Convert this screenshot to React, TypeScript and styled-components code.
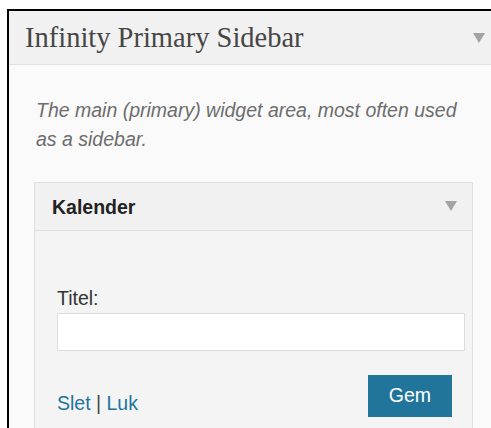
import React from 'react'
import styled, { createGlobalStyle } from 'styled-components'

const GlobalStyle = createGlobalStyle`
  html, body {
    margin: 0;
    padding: 0;
    background: #ffffff;
  }
  body {
    font-family: 'Liberation Sans', Arial, sans-serif;
  }
`

const SidebarPanel = styled.div`
  margin: 9px 0 0 7px;
  border-top: 2px solid #000;
  border-left: 2px solid #000;
  background-color: #fafafa;
  height: 417px;
  overflow: hidden;
`

const SidebarHeader = styled.div`
  display: flex;
  align-items: center;
  justify-content: space-between;
  height: 53px;
  padding: 0 6px 0 16px;
  background-color: #f1f1f1;
  border-bottom: 1px solid #e1e1e1;
`

const SidebarTitle = styled.h3`
  margin: 0;
  font-family: 'Liberation Serif', 'Times New Roman', serif;
  font-weight: normal;
  font-size: 28.5px;
  color: #464646;
`

const Toggle = styled.span<{ $size: number }>`
  display: block;
  width: 0;
  height: 0;
  border-left: ${({ $size }) => $size / 2}px solid transparent;
  border-right: ${({ $size }) => $size / 2}px solid transparent;
  border-top: ${({ $size }) => $size * 0.85}px solid #a3a3a3;
`

const SidebarBody = styled.div`
  padding: 31px 0 0 27px;
`

const Description = styled.p`
  margin: 0 0 27px;
  font-size: 19.5px;
  line-height: 29.25px;
  font-style: italic;
  color: #6d6d6d;
  padding-right: 20px;
`

const Widget = styled.div`
  margin-left: -2px;
  width: 437px;
  border: 1px solid #dfdfdf;
  background-color: #f4f4f4;
`

const WidgetHeader = styled.div`
  display: flex;
  align-items: center;
  justify-content: space-between;
  height: 47px;
  padding: 0 15px 0 17px;
  background-color: #f1f1f1;
  border-bottom: 1px solid #dfdfdf;
`

const WidgetTitle = styled.h4`
  margin: 0;
  padding-top: 3px;
  font-size: 19.5px;
  font-weight: bold;
  color: #222;
`

const WidgetInside = styled.div`
  padding: 56px 7px 30px 22px;
`

const Label = styled.label`
  display: block;
  font-size: 19.5px;
  line-height: 22px;
  color: #333;
  margin-bottom: 4px;
`

const TextInput = styled.input`
  display: block;
  box-sizing: border-box;
  width: 100%;
  height: 38px;
  margin: 0;
  border: 1px solid #dddddd;
  background: #fff;
  outline: none;
`

const ControlRow = styled.div`
  display: flex;
  align-items: flex-end;
  justify-content: space-between;
  margin-top: 24px;
  padding-right: 13px;
`

const LinkGroup = styled.div`
  font-size: 19.5px;
  line-height: 22px;
  color: #444;
  padding-bottom: 3px;
`

const ActionLink = styled.a`
  color: #21759b;
  text-decoration: none;
`

const SaveButton = styled.button`
  width: 84px;
  height: 42px;
  border: none;
  background-color: #21759b;
  color: #fff;
  font-family: 'Liberation Sans', Arial, sans-serif;
  font-size: 19.5px;
  padding: 0;
`

const App: React.FC = () => {
  return (
    <>
      <GlobalStyle />
      <SidebarPanel>
        <SidebarHeader>
          <SidebarTitle>Infinity Primary Sidebar</SidebarTitle>
          <Toggle $size={12} />
        </SidebarHeader>
        <SidebarBody>
          <Description>The main (primary) widget area, most often used as a sidebar.</Description>
          <Widget>
            <WidgetHeader>
              <WidgetTitle>Kalender</WidgetTitle>
              <Toggle $size={12} />
            </WidgetHeader>
            <WidgetInside>
              <Label htmlFor="widget-title">Titel:</Label>
              <TextInput id="widget-title" type="text" />
              <ControlRow>
                <LinkGroup>
                  <ActionLink href="#">Slet</ActionLink> | <ActionLink href="#">Luk</ActionLink>
                </LinkGroup>
                <SaveButton>Gem</SaveButton>
              </ControlRow>
            </WidgetInside>
          </Widget>
        </SidebarBody>
      </SidebarPanel>
    </>
  )
}

export default App
